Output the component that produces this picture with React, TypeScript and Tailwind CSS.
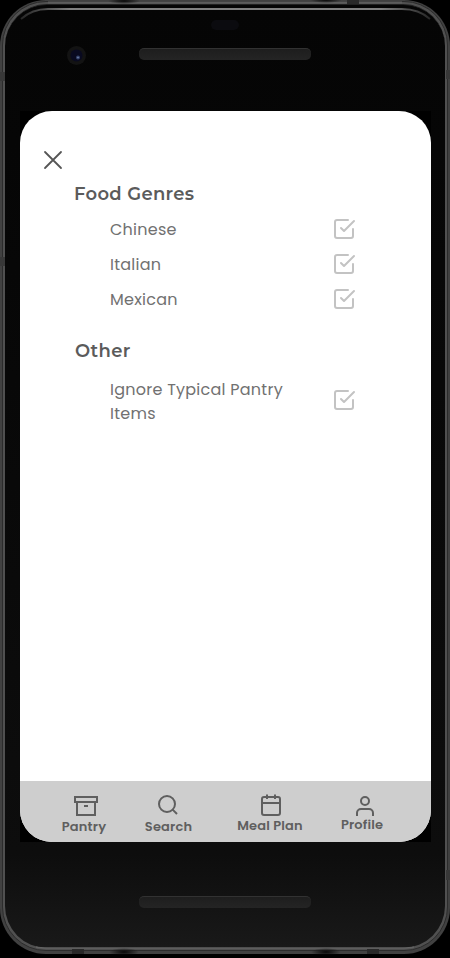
import type { ReactNode } from "react";

function Icon({ children, className = "" }: { children: ReactNode; className?: string }) {
  return (
    <svg viewBox="0 0 24 24" fill="none" stroke="currentColor" strokeWidth="2" className={`block size-6 shrink-0 ${className}`}>
      {children}
    </svg>
  );
}

function CheckSquare({ className }: { className: string }) {
  return (
    <Icon className={`text-[#c3c3c3] [stroke-linecap:round] [stroke-linejoin:round] ${className}`}>
      <path d="M9 11l3 3L22 4" />
      <path d="M21 12v7a2 2 0 0 1-2 2H5a2 2 0 0 1-2-2V5a2 2 0 0 1 2-2h11" />
    </Icon>
  );
}

function Option({ label, className, checkClass = "-mt-px" }: { label: string; className: string; checkClass?: string }) {
  return (
    <li className={`flex w-[246px] items-start justify-between ${className}`}>
      <span className="w-[190px] pl-[0.5px] whitespace-pre-line text-base leading-6 tracking-[0.25px] text-[#717171]">{label}</span>
      <CheckSquare className={checkClass} />
    </li>
  );
}

function Tab({ label, icon, className, labelClass }: { label: string; icon: ReactNode; className: string; labelClass: string }) {
  return (
    <button className={`flex flex-col items-center ${className}`}>
      {icon}
      <span className={`whitespace-nowrap text-[13px] leading-4 font-semibold tracking-[0.15px] ${labelClass}`}>{label}</span>
    </button>
  );
}

function Speaker() {
  return <div className="h-3 w-[172px] rounded-[5px] border-t border-[#323232] bg-linear-to-b from-[#1e1e1e] to-[#242424]" />;
}

export default function App() {
  return (
    <div className="relative h-[958px] w-[450px] overflow-hidden bg-black font-[Poppins,Inter,sans-serif]">
      <div className="h-[954px] w-[450px] rounded-[46px] bg-[#414141] px-[2px] pt-[1px] pb-[3px]">
        <div className="h-full rounded-[44px] border border-[#2c2c2c] bg-[#505050] px-[2px] pt-[2px] pb-[2px]">
          <div className="flex h-full flex-col items-center rounded-[42px] border-t border-[#202020] bg-linear-to-b from-[#050505] from-0% via-[#0d0d0d] via-90% to-[#191919] to-100%">
            <header className="flex h-[106px] w-full flex-col items-center pt-[43px]">
              <Speaker />
            </header>
            <div className="bg-black">
              <main className="flex h-[730.5px] w-[411px] flex-col overflow-hidden rounded-[32px] bg-white">
                <div className="h-[670px] shrink-0 pt-[37px]">
                  <button aria-label="Close" className="ml-[21px] block text-[#555555]">
                    <svg viewBox="0 0 24 24" fill="none" stroke="currentColor" strokeWidth="1.8" strokeLinecap="round" className="block size-6">
                      <path d="M4 4l16 16M20 4L4 20" />
                    </svg>
                  </button>
                  <h2 className="mt-[10px] ml-[54.5px] h-6 whitespace-nowrap text-[18px] leading-6 font-semibold tracking-[0.3px] text-[#5b5b5b] font-[Montserrat,Inter,sans-serif]">Food Genres</h2>
                  <ul className="ml-[90px]">
                    <Option label="Chinese" className="mt-[12px] h-[23px]" />
                    <Option label="Italian" className="mt-[12px] h-[23px]" />
                    <Option label="Mexican" className="mt-[12px] h-[23px]" />
                  </ul>
                  <h2 className="mt-[28px] ml-[55.5px] h-6 whitespace-nowrap text-[18px] leading-6 font-semibold tracking-[0.3px] text-[#5b5b5b] font-[Montserrat,Inter,sans-serif]">Other</h2>
                  <ul className="ml-[90px]">
                    <Option label={"Ignore Typical Pantry\nItems"} className="mt-[15px] h-12" checkClass="mt-[10px]" />
                  </ul>
                </div>
                <nav className="flex h-[61px] shrink-0 bg-[#cecece] pt-[12px] text-[#5f5f5f]">
                  <Tab
                    label="Pantry"
                    className="ml-[36px] w-[60px] pt-px"
                    labelClass="mt-px mr-[3px]"
                    icon={<Icon><path d="M21 8v13H3V8" /><rect x="1" y="3" width="22" height="5" /><path d="M10 12h4" /></Icon>}
                  />
                  <Tab
                    label="Search"
                    className="ml-[22px] w-[60px]"
                    labelClass="mt-[2px] ml-[2px]"
                    icon={<Icon><circle cx="11" cy="11" r="8" /><path d="M21 21l-4.35-4.35" /></Icon>}
                  />
                  <Tab
                    label="Meal Plan"
                    className="ml-[33px] w-[80px]"
                    labelClass="mt-px mr-px"
                    icon={<Icon><rect x="3" y="4" width="18" height="18" rx="2" /><path d="M16 1.5v4.5M8 1.5v4.5M3 10h18" /></Icon>}
                  />
                  <Tab
                    label="Profile"
                    className="ml-[21px] w-[60px] pt-px"
                    labelClass="-mt-px ml-px"
                    icon={<Icon className="ml-[6px]"><path d="M20 22v-3a4 4 0 0 0-4-4H8a4 4 0 0 0-4 4v3" /><circle cx="12" cy="7" r="4" /></Icon>}
                  />
                </nav>
              </main>
            </div>
            <footer className="flex w-full justify-center pt-[54px]">
              <Speaker />
            </footer>
          </div>
        </div>
      </div>

      {/* Lens, sensor and the light along the glass and metal edges */}
      <svg viewBox="0 0 450 958" fill="none" className="pointer-events-none absolute inset-0 h-full w-full">
        <defs>
          <linearGradient id="rim">
            <stop offset="0" stopColor="#777" stopOpacity="0.3" />
            <stop offset="0.12" stopColor="#808080" />
            <stop offset="0.88" stopColor="#808080" />
            <stop offset="1" stopColor="#777" stopOpacity="0.3" />
          </linearGradient>
          <radialGradient id="smudge"><stop stopColor="#080808" /><stop offset="1" stopColor="#080808" stopOpacity="0" /></radialGradient>
        </defs>
        <path d="M21 19Q32 9 48 9H402Q419 9 430 19" stroke="url(#rim)" strokeWidth="1.8" />
        <path d="M48 2.5H402" stroke="#5c5c5c" strokeWidth="2" />
        <path d="M36 947Q40 948 48 948H402Q410 948 414 947" stroke="#626262" strokeWidth="1.5" />
        <rect x="211" y="20" width="28" height="10" rx="5" fill="#0b0b0f" />
        <circle cx="76.5" cy="55.5" r="9.5" fill="#131313" />
        <circle cx="76.5" cy="55.5" r="6" fill="#090a20" />
        <circle cx="78" cy="57.5" r="2" fill="#35436b" />
        <circle cx="78" cy="57.5" r="0.8" fill="#7786a8" />
        <ellipse cx="124" cy="1" rx="16" ry="3" fill="url(#smudge)" />
        <ellipse cx="326" cy="0" rx="16" ry="3" fill="url(#smudge)" />
        <ellipse cx="124" cy="952" rx="15" ry="4" fill="url(#smudge)" />
        <ellipse cx="326" cy="952" rx="15" ry="4" fill="url(#smudge)" />
        <path d="M347 0h12v4h-12zM72 949h12v5h-12zM367 949h12v5h-12z" fill="#292929" />
        <path d="M0 72h5v9H0zM446 70h4v9h-4zM0 257h5v9H0zM446 870h4v10h-4z" fill="#383838" />
      </svg>
    </div>
  );
}
